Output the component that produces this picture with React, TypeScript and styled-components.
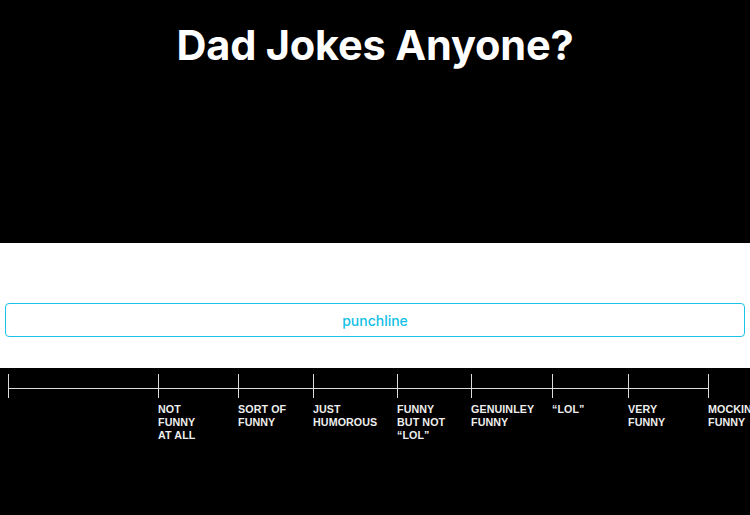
import React from 'react';
import styled, { createGlobalStyle } from 'styled-components';

interface Stop {
  width: number;
  label: string[];
}

// distance to the next tick, and the label that sits under each tick
const stops: Stop[] = [
  { width: 150, label: [] },
  { width: 80, label: ['NOT', 'FUNNY', 'AT ALL'] },
  { width: 75, label: ['SORT OF', 'FUNNY'] },
  { width: 84, label: ['JUST', 'HUMOROUS'] },
  { width: 74, label: ['FUNNY', 'BUT NOT', '\u201CLOL\u201D'] },
  { width: 81, label: ['GENUINLEY', 'FUNNY'] },
  { width: 76, label: ['\u201CLOL\u201D'] },
  { width: 80, label: ['VERY', 'FUNNY'] },
  { width: 0, label: ['MOCKINGLY', 'FUNNY'] },
];

const GlobalStyle = createGlobalStyle`
  html, body {
    margin: 0;
    padding: 0;
    background: #000;
    font-family: Inter, 'Liberation Sans', sans-serif;
  }
`;

const Page = styled.div`
  width: 750px;
  height: 515px;
  display: flex;
  flex-direction: column;
  overflow: hidden;
`;

const Header = styled.header`
  height: 243px;
  background: #000;
  display: flex;
  justify-content: center;
`;

const Title = styled.h1`
  margin: 20px 0 0;
  color: #fff;
  font-size: 41.5px;
  font-weight: 700;
  letter-spacing: -0.2px;
  line-height: 50px;
`;

const JokeArea = styled.section`
  height: 125px;
  background: #fff;
  padding: 60px 5px 0;
  box-sizing: border-box;
`;

const PunchlineButton = styled.button`
  width: 100%;
  height: 34px;
  background: #fff;
  border: 1px solid #1cc3e8;
  border-radius: 4px;
  color: #12bfe6;
  font-family: Inter, 'Liberation Sans', sans-serif;
  font-size: 14px;
  font-weight: 500;
  cursor: pointer;
`;

const ScaleArea = styled.section`
  flex: 1;
  background: #000;
  padding: 6px 0 0 8px;
  overflow: hidden;
`;

const Scale = styled.div`
  display: flex;
  white-space: nowrap;
`;

const Stop = styled.div<{ $width: number }>`
  flex: 0 0 ${p => p.$width}px;
  position: relative;
  display: flex;
  flex-direction: column;
`;

const Tick = styled.div<{ $line: boolean }>`
  height: 24px;
  border-left: 1.5px solid #ddd;
  position: relative;

  &::after {
    content: '';
    display: ${p => (p.$line ? 'block' : 'none')};
    position: absolute;
    left: 0;
    right: 0;
    top: 14px;
    border-top: 1.5px solid #ddd;
  }
`;

const Label = styled.div`
  margin-top: 5px;
  color: #eee;
  font-family: 'Liberation Sans', Arial, sans-serif;
  font-size: 10.7px;
  font-weight: 700;
  line-height: 13px;
  letter-spacing: 0.1px;
`;

const App: React.FC = () => (
  <>
    <GlobalStyle />
    <Page>
      <Header>
        <Title>Dad Jokes Anyone?</Title>
      </Header>
      <JokeArea>
        <PunchlineButton>punchline</PunchlineButton>
      </JokeArea>
      <ScaleArea>
        <Scale>
          {stops.map((s, i) => (
            <Stop key={i} $width={s.width}>
              <Tick $line={s.width > 0} />
              <Label>
                {s.label.map((l, j) => (
                  <div key={j}>{l}</div>
                ))}
              </Label>
            </Stop>
          ))}
        </Scale>
      </ScaleArea>
    </Page>
  </>
);

export default App;
